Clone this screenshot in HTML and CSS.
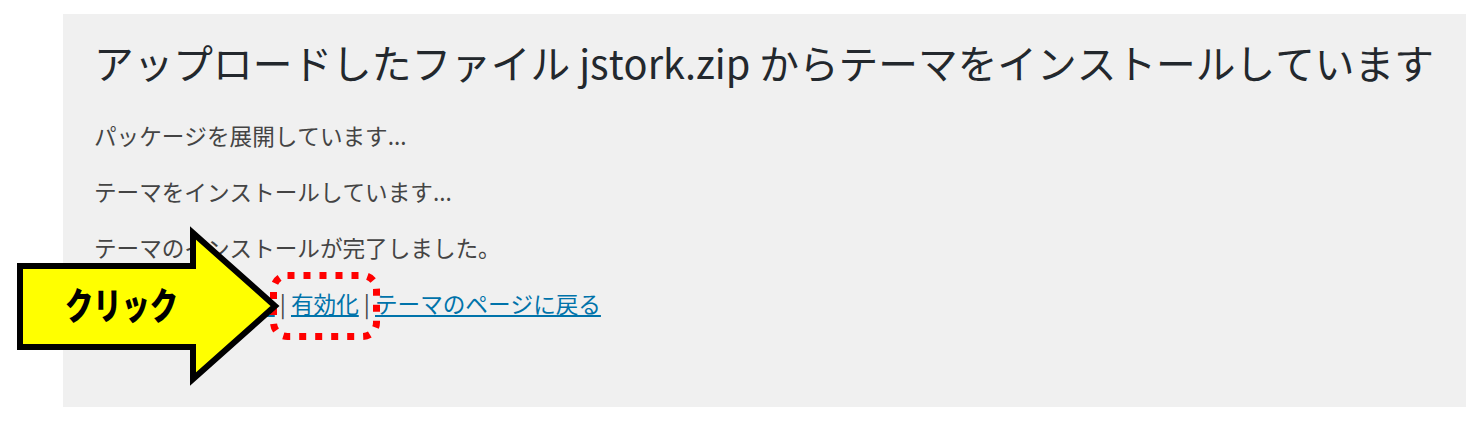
FILE: index.html
```html
<!DOCTYPE html>
<html lang="ja">
<head>
    <meta charset="UTF-8">
    <title>テーマのインストール</title>
    <link rel="stylesheet" href="styles.css">
</head>
<body>
    <div class="wrap">
        <div class="panel">
            <h1 class="title">アップロードしたファイル jstork.zip からテーマをインストールしています</h1>
            <p>パッケージを展開しています...</p>
            <p>テーマをインストールしています...</p>
            <p>テーマのインストールが完了しました。</p>
            <p class="actions">
                <a href="#">ライブプレビュー</a> | <a href="#">有効化</a> | <a href="#">テーマのページに戻る</a>
            </p>
        </div>
    </div>

    <!-- annotation drawn over the screen -->
    <svg class="note" width="1477" height="424" viewBox="0 0 1477 424">
        <rect x="273.5" y="275.5" width="103" height="61" rx="14" ry="14"
              fill="none" stroke="#ff0000" stroke-width="7" stroke-dasharray="7 9"/>
        <polygon points="20,266 193,266 193,233 275,306 193,379 193,347 20,347"
                 fill="#ffff00" stroke="#000" stroke-width="6" stroke-linejoin="miter"/>
        <text class="note-label" x="65" y="320" textLength="113" lengthAdjust="spacingAndGlyphs">クリック</text>
    </svg>
</body>
</html>
```

FILE: styles.css
```css
body {
    margin: 0;
    background-color: #fff;
    font-family: "Noto Sans CJK JP", "Noto Sans", sans-serif;
    font-kerning: none;
    color: #444;
    position: relative;
}

.wrap {
    padding: 14px 11px 17px 63px;
}

.panel {
    background-color: #f0f0f0;
    height: 393px;
    padding: 0 31px;
    box-sizing: border-box;
    overflow: hidden;
}

.title {
    margin: 0;
    padding-top: 22px;
    font-size: 39.7px;
    font-weight: 400;
    line-height: 1.3;
    color: #23282d;
    white-space: nowrap;
}

.panel p {
    font-size: 22.6px;
    line-height: 33.6px;
    margin: 22.4px 0;
}

.title + p {
    margin-top: 31.4px;
}

.actions a {
    color: #0073aa;
    text-decoration: underline;
}

.note {
    position: absolute;
    top: 0;
    left: 0;
}

.note-label {
    font-family: "Noto Sans CJK JP", sans-serif;
    font-size: 37px;
    font-weight: 900;
    fill: #000;
}
```
